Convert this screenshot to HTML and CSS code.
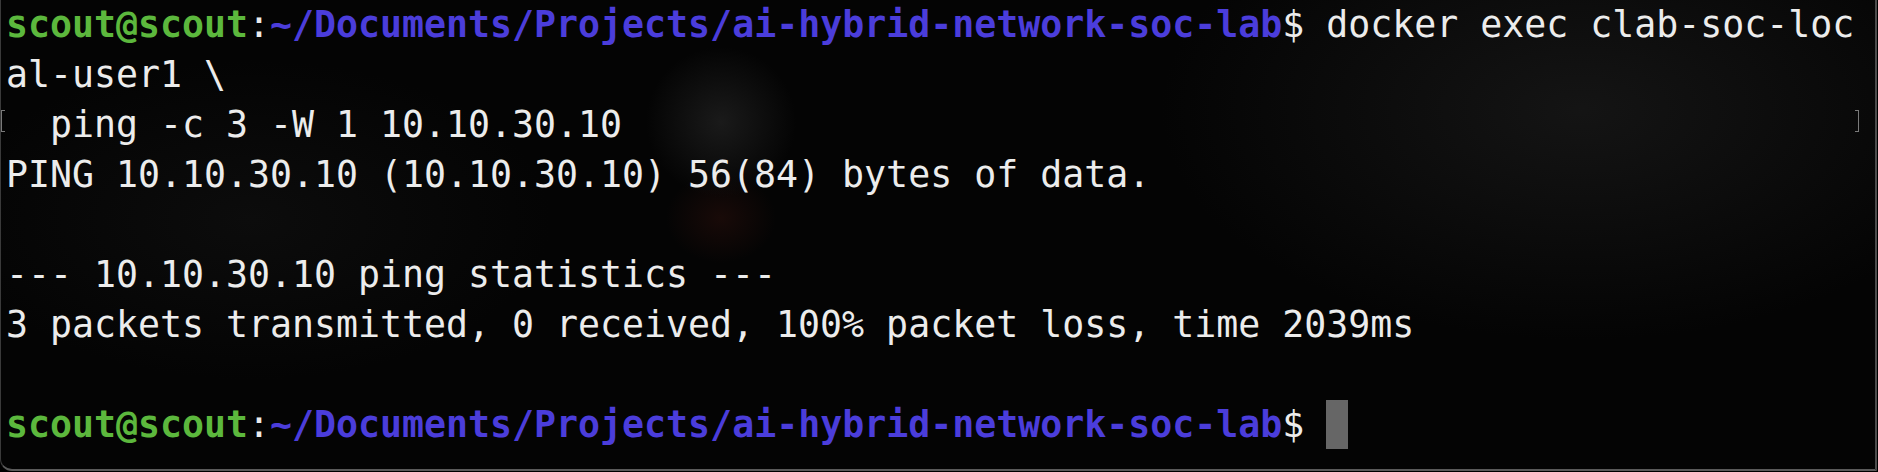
FILE: index.html
```html
<!DOCTYPE html>
<html lang="en">
<head>
<meta charset="utf-8">
<title>Terminal</title>
<link rel="stylesheet" href="styles.css">
</head>
<body>
<div class="window">
  <div class="screen">
    <div class="line"><span class="user">scout@scout</span>:<span class="path">~/Documents/Projects/ai-hybrid-network-soc-lab</span>$ docker exec clab-soc-loc</div>
    <div class="line">al-user1 \</div>
    <div class="line marked">  ping -c 3 -W 1 10.10.30.10</div>
    <div class="line">PING 10.10.30.10 (10.10.30.10) 56(84) bytes of data.</div>
    <div class="line"> </div>
    <div class="line">--- 10.10.30.10 ping statistics ---</div>
    <div class="line">3 packets transmitted, 0 received, 100% packet loss, time 2039ms</div>
    <div class="line"> </div>
    <div class="line"><span class="user">scout@scout</span>:<span class="path">~/Documents/Projects/ai-hybrid-network-soc-lab</span>$ <span class="cursor"></span></div>
  </div>
</div>
</body>
</html>
```

FILE: styles.css
```css
html, body {
  margin: 0;
  padding: 0;
  background: #000;
}

body {
  width: 1878px;
  height: 472px;
  overflow: hidden;
}

.window {
  box-sizing: border-box;
  width: 1877px;
  height: 471px;
  border-right: 2px solid #4c4c4c;
  border-bottom: 2px solid #5a5a5a;
  border-left: 1px solid #3a3a3a;
  border-bottom-left-radius: 12px;
  overflow: hidden;
  background:
    radial-gradient(ellipse 75px 75px at 720px 122px, rgba(30, 30, 30, 0.85), rgba(20, 20, 20, 0) 100%),
    radial-gradient(ellipse 55px 45px at 720px 218px, rgba(45, 16, 12, 0.5), rgba(30, 10, 8, 0) 100%),
    radial-gradient(ellipse 420px 230px at 1580px 110px, rgba(22, 22, 22, 0.9), rgba(12, 12, 12, 0) 100%),
    radial-gradient(ellipse 300px 160px at 250px 220px, rgba(14, 14, 14, 0.8), rgba(0, 0, 0, 0) 100%),
    #040404;
}

.screen {
  padding-left: 5px;
  font-family: "DejaVu Sans Mono", "Liberation Mono", monospace;
  font-size: 36.55px;
  line-height: 50px;
  color: #ececec;
}

.line {
  height: 50px;
  white-space: pre;
}

.user {
  color: #5cb83d;
  font-weight: bold;
}

.path {
  color: #4b3ddb;
  font-weight: bold;
}

.marked {
  position: relative;
}

.marked::before,
.marked::after {
  content: "";
  position: absolute;
  top: 10px;
  width: 3px;
  height: 20px;
  border: 1px solid #7a7a7a;
}

.marked::before {
  left: -5px;
  border-right: none;
}

.marked::after {
  left: 1849px;
  border-left: none;
}

.cursor {
  display: inline-block;
  vertical-align: top;
  width: 22px;
  height: 49px;
  background: #666;
}
```
